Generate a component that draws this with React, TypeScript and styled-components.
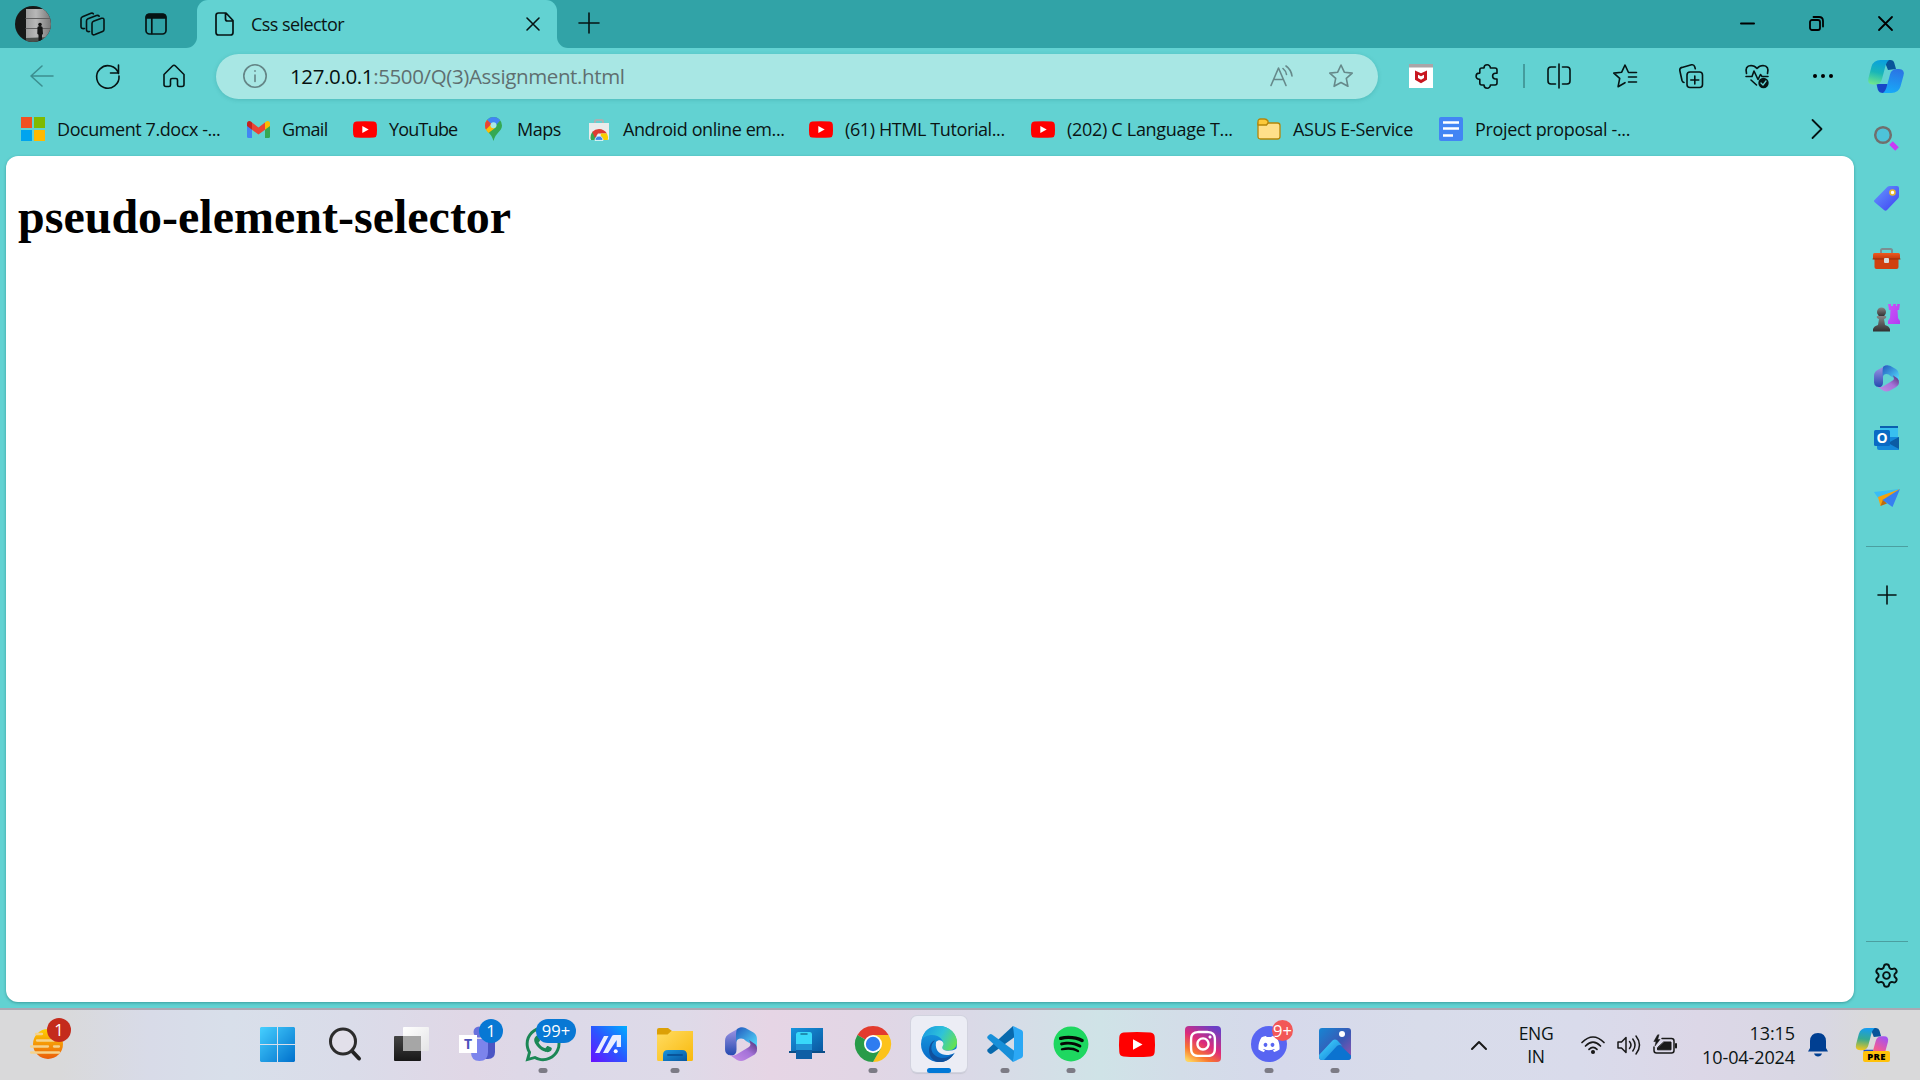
import React from 'react';
import styled, { createGlobalStyle } from 'styled-components';
import { FaDiscord, FaInstagram, FaSpotify, FaWhatsapp } from 'react-icons/fa';
import { Settings } from 'lucide-react';

const UI_FONT = '"Open Sans", "Noto Sans", sans-serif';

const GlobalStyle = createGlobalStyle`
  *, *::before, *::after { box-sizing: border-box; }
  html, body { margin: 0; padding: 0; overflow: hidden; }
  body { font-family: ${UI_FONT}; color: #0b1414; }
  svg { display: block; overflow: visible; flex: none; }
`;

const Desktop = styled.div`
  display: flex;
  flex-direction: column;
  width: 1920px;
  height: 1080px;
  background: #62d2d2;
  overflow: hidden;
`;

/* ---------- title bar ---------- */

const TitleBar = styled.header`
  display: flex;
  height: 48px;
  background: #62d2d2;
`;

const TitleLeft = styled.div`
  display: flex;
  align-items: center;
  width: 197px;
  padding-left: 15px;
  background: #31a3a7;
  border-bottom-right-radius: 11px;
`;

const TitleIcon = styled.span<{ $gap: number }>`
  margin-left: ${(p) => p.$gap}px;
`;

const TabBack = styled.div`
  background: #31a3a7;
  width: 360px;
`;

const Tab = styled.div`
  display: flex;
  align-items: center;
  width: 360px;
  height: 48px;
  padding: 0 17px 0 18px;
  background: #62d2d2;
  border-radius: 11px 11px 0 0;
`;

const TabTitle = styled.span`
  flex: 1;
  margin-left: 17px;
  font-size: 18px;
  letter-spacing: -0.56px;
  line-height: 24px;
`;

const TitleRight = styled.div`
  display: flex;
  flex: 1;
  align-items: center;
  justify-content: space-between;
  padding: 0 27px 2px 22px;
  background: #31a3a7;
  border-bottom-left-radius: 11px;
`;

const WindowButtons = styled.div`
  display: flex;
  align-items: center;
  gap: 54px;
`;

/* ---------- toolbar ---------- */

const Toolbar = styled.nav`
  display: flex;
  align-items: center;
  height: 57px;
  padding: 0 15px 1px 30px;
`;

const NavButtons = styled.div`
  display: flex;
  align-items: center;
  gap: 42px;
  width: 186px;
`;

const AddressBar = styled.div`
  display: flex;
  align-items: center;
  width: 1162px;
  height: 45px;
  padding: 0 24px 0 27px;
  background: #a8e7e4;
  border-radius: 23px;
  box-shadow: 0 1px 4px rgba(20, 110, 110, 0.22);
`;

const Url = styled.span`
  flex: 1;
  margin-left: 23px;
  color: #5f6f70;
  font-size: 20.5px;
  letter-spacing: -0.37px;
  line-height: 28px;
  b { color: #061010; font-weight: 400; }
`;

const AddressActions = styled.div`
  display: flex;
  gap: 35px;
  margin-right: 1px;
`;

const ToolActions = styled.div`
  display: flex;
  align-items: center;
  gap: 42px;
  flex: 1;
  margin-left: 31px;
`;

const ToolDivider = styled.span`
  width: 2px;
  height: 24px;
  margin: 0 -20px 0 -18px;
  background: #449c9d;
`;

const CopilotButton = styled.div`
  margin-left: -9px;
`;

/* ---------- bookmarks ---------- */

const BookmarkBar = styled.div`
  display: flex;
  align-items: center;
  height: 48px;
  padding: 0 32px 0 21px;
`;

const Bookmark = styled.div<{ $width: number }>`
  display: flex;
  align-items: center;
  width: ${(p) => p.$width}px;
`;

const BookmarkLabel = styled.span<{ $track: number; $gap?: number }>`
  margin-left: ${(p) => p.$gap ?? 12}px;
  font-size: 18px;
  letter-spacing: ${(p) => p.$track}px;
  line-height: 24px;
  white-space: nowrap;
`;

const More = styled.div`
  margin-left: auto;
`;

/* ---------- main area ---------- */

const Body = styled.div`
  display: flex;
  flex: 1;
  min-height: 0;
`;

const BrowserColumn = styled.div`
  display: flex;
  flex-direction: column;
  width: 1854px;
`;

const PageFrame = styled.main`
  flex: 1;
  margin: 3px 0 6px 6px;
  padding: 33px 12px;
  background: #fff;
  border-radius: 12px;
  box-shadow: 0 1px 3px rgba(10, 90, 90, 0.45);
`;

const Heading = styled.h1`
  margin: 0;
  color: #000;
  font: bold 48px/56px "Liberation Serif", serif;
`;

const Sidebar = styled.aside`
  display: flex;
  flex-direction: column;
  align-items: center;
  width: 66px;
  padding: 3px 1px 0 0;
`;

const SideItem = styled.div<{ $height?: number }>`
  display: grid;
  place-items: center;
  height: ${(p) => p.$height ?? 60}px;
`;

const SideRule = styled.hr`
  width: 42px;
  height: 1px;
  margin: 0;
  border: 0;
  background: #4b9fa0;
`;

const Spacer = styled.div`
  flex: 1;
`;

/* ---------- taskbar ---------- */

const Taskbar = styled.footer`
  display: flex;
  height: 72px;
  border-top: 2px solid #aaa9b3;
  background: linear-gradient(90deg,
    #d9d9da 0, #d9d9da 60px, #d8dbe8 150px, #d8dfea 230px, #dadce9 350px,
    #e0d7e6 470px, #dcd9e8 570px, #dedae8 680px, #e6d5e5 770px, #e2d6e5 860px,
    #dad9e7 970px, #cfe3e7 1100px, #d3dde8 1180px, #d6d9eb 1280px, #d8dcea 1420px,
    #d9dbeb 1580px, #dcd7e7 1700px, #d8d7e3 1820px, #d9d9da 1870px);
`;

const Weather = styled.div`
  position: relative;
  width: 244px;
  padding: 19px 0 0 30px;
`;

const Apps = styled.div`
  display: flex;
`;

const AppCell = styled.div<{ $active?: boolean }>`
  position: relative;
  display: grid;
  place-items: center;
  width: 56px;
  height: 56px;
  margin: 6px 5px 0;
  border-radius: 6px;
  background: ${(p) => (p.$active ? '#ecedf5' : 'transparent')};
  box-shadow: ${(p) => (p.$active ? '0 0 0 1px #d2d3df, 0 2px 1px #c8c8d4' : 'none')};

  &:first-child { margin-right: 7px; }
`;

const RunMark = styled.i<{ $active?: boolean }>`
  position: absolute;
  bottom: -1px;
  left: 50%;
  width: ${(p) => (p.$active ? 24 : 9)}px;
  height: 5px;
  border-radius: 3px;
  background: ${(p) => (p.$active ? '#0078d7' : '#7c7b85')};
  transform: translateX(-50%);
`;

const Badge = styled.span<{ $left: number; $top: number; $width: number; $color: string; $size?: number }>`
  position: absolute;
  left: ${(p) => p.$left}px;
  top: ${(p) => p.$top}px;
  width: ${(p) => p.$width}px;
  height: ${(p) => p.$size ?? 24}px;
  border-radius: 12px;
  background: ${(p) => p.$color};
  color: #fff;
  font-size: 16.5px;
  line-height: ${(p) => p.$size ?? 24}px;
  text-align: center;
`;

const Tray = styled.div`
  display: flex;
  align-items: center;
  flex: 1;
  padding-left: 103px;
`;

const Language = styled.div`
  width: 44px;
  margin-left: 27px;
  font-size: 17.5px;
  line-height: 23px;
  letter-spacing: -0.4px;
  text-align: center;
`;

const StatusIcons = styled.div`
  display: flex;
  align-items: center;
  gap: 12px;
  margin-left: 23px;
`;

const Clock = styled.div`
  width: 118px;
  padding-bottom: 1px;
  font-size: 18px;
  letter-spacing: -0.1px;
  line-height: 24px;
  text-align: right;
`;

const TrayItem = styled.div<{ $gap: number }>`
  margin-left: ${(p) => p.$gap}px;
`;

/* ---------- drawings ---------- */

type IconProps = { w: number; h?: number; box?: string; stroke?: string; sw?: number; children: React.ReactNode };

const Icon = ({ w, h = w, box, stroke, sw = 1.6, children }: IconProps) => (
  <svg
    width={w}
    height={h}
    viewBox={box ?? `0 0 ${w} ${h}`}
    fill={stroke ? 'none' : undefined}
    stroke={stroke}
    strokeWidth={stroke ? sw : undefined}
    strokeLinecap="round"
    strokeLinejoin="round"
  >
    {children}
  </svg>
);

const INK = '#061414';

const Gradients = () => (
  <svg width="0" height="0" style={{ position: 'absolute' }}>
    <defs>
      <linearGradient id="win" x1="0" y1="0" x2="1" y2="1"><stop stopColor="#46d0ff" /><stop offset="1" stopColor="#0070cc" /></linearGradient>
      <linearGradient id="asus" x1="0" y1="1" x2="1" y2="0"><stop stopColor="#6a10ff" /><stop offset=".5" stopColor="#2a57ff" /><stop offset="1" stopColor="#00aeff" /></linearGradient>
      <linearGradient id="folder" x1="0" y1="0" x2="1" y2="1"><stop stopColor="#ffdc62" /><stop offset="1" stopColor="#f9b90c" /></linearGradient>
      <linearGradient id="blueDeep" x1="0" y1="0" x2="1" y2="1"><stop stopColor="#1795de" /><stop offset="1" stopColor="#0a57a0" /></linearGradient>
      <linearGradient id="m1" x1="0" y1="0" x2="0" y2="1"><stop stopColor="#a79ae8" /><stop offset="1" stopColor="#2449b0" /></linearGradient>
      <linearGradient id="m2" x1="0" y1="0" x2="1" y2="1"><stop stopColor="#2258bd" /><stop offset="1" stopColor="#55e0ff" /></linearGradient>
      <linearGradient id="m3" x1="0" y1="1" x2="1" y2="0"><stop stopColor="#c88fe8" /><stop offset=".55" stopColor="#a472d8" /><stop offset="1" stopColor="#4b2c73" /></linearGradient>
      <linearGradient id="edgeTop" x1="0" y1="0.3" x2="1" y2="0.7"><stop stopColor="#1b9de2" /><stop offset=".5" stopColor="#2fc3d8" /><stop offset="1" stopColor="#67e34c" /></linearGradient>
      <linearGradient id="edgeLeft" x1="0" y1="0" x2="0" y2="1"><stop stopColor="#1aa0e2" /><stop offset="1" stopColor="#0868c6" /></linearGradient>
      <linearGradient id="insta" x1=".15" y1="1" x2=".75" y2="0"><stop stopColor="#ffd45c" /><stop offset=".25" stopColor="#f9762f" /><stop offset=".55" stopColor="#dc2a7b" /><stop offset="1" stopColor="#6a3fc6" /></linearGradient>
      <linearGradient id="photo" x1="0" y1="0" x2="1" y2="1"><stop stopColor="#1686d4" /><stop offset=".55" stopColor="#3a58b4" /><stop offset="1" stopColor="#9a52b0" /></linearGradient>
      <linearGradient id="sun" x1="0" y1="0" x2="0" y2="1"><stop stopColor="#ffd000" /><stop offset="1" stopColor="#ea5c0c" /></linearGradient>
      <linearGradient id="copA" x1=".5" y1="0" x2=".3" y2="1"><stop stopColor="#0aa0dd" /><stop offset=".5" stopColor="#19b6b8" /><stop offset="1" stopColor="#6ee68c" /></linearGradient>
      <linearGradient id="copB" x1=".6" y1="0" x2=".4" y2="1"><stop stopColor="#2b74e4" /><stop offset="1" stopColor="#17a9f8" /></linearGradient>
      <linearGradient id="preA" x1=".5" y1="0" x2=".4" y2="1"><stop stopColor="#159cf2" /><stop offset=".5" stopColor="#36aa90" /><stop offset="1" stopColor="#f3c61c" /></linearGradient>
      <linearGradient id="preB" x1=".8" y1="0" x2=".3" y2="1"><stop stopColor="#a052f5" /><stop offset=".6" stopColor="#ee5a9a" /><stop offset="1" stopColor="#ff7d52" /></linearGradient>
      <linearGradient id="tag" x1="0" y1="0" x2="1" y2="1"><stop stopColor="#669aff" /><stop offset="1" stopColor="#3e3ff2" /></linearGradient>
      <linearGradient id="pink" x1="0" y1="0" x2="1" y2="1"><stop stopColor="#cc55f8" /><stop offset="1" stopColor="#b23cf2" /></linearGradient>
      <linearGradient id="box" x1="0" y1="0" x2="0" y2="1"><stop stopColor="#ee5a20" /><stop offset="1" stopColor="#c23b0e" /></linearGradient>
      <linearGradient id="pawn" x1="0" y1="0" x2="0" y2="1"><stop stopColor="#858585" /><stop offset="1" stopColor="#303030" /></linearGradient>
      <linearGradient id="wall" x1="0" y1="0" x2="1" y2="0"><stop stopColor="#9c9c9c" /><stop offset=".4" stopColor="#b8b8b8" /><stop offset="1" stopColor="#777" /></linearGradient>
      <linearGradient id="white" x1="0" y1="0" x2="1" y2="1"><stop stopColor="#fff" /><stop offset="1" stopColor="#e4e4e6" /></linearGradient>
      <linearGradient id="dark" x1="0" y1="0" x2="0" y2="1"><stop stopColor="#444" /><stop offset="1" stopColor="#171717" /></linearGradient>
      <linearGradient id="aqua" x1="0" y1="0" x2="1" y2="1"><stop stopColor="#4bdcff" /><stop offset="1" stopColor="#0a78d8" /></linearGradient>
      <clipPath id="round"><circle cx="18" cy="18" r="18" /></clipPath>
    </defs>
  </svg>
);

const Avatar = () => (
  <Icon w={36}>
    <g clipPath="url(#round)">
      <rect width="36" height="36" fill="#161817" />
      <rect x="11" y="3" width="25" height="30" fill="url(#wall)" />
      <path d="M11 12.5h25M11 22.5h25" stroke="#606060" strokeWidth="1" />
      <path d="M11 32l25-1v5H11z" fill="#4b4f4c" />
      <circle cx="25" cy="18.5" r="1.8" fill="#151515" />
      <path d="M22.5 21q2.500-2 5 0l.5 7-1 .8V35h-3.500v-6.200l-1.200-1z" fill="#151515" />
    </g>
  </Icon>
);

const Workspaces = () => (
  <Icon w={25} h={24} stroke={INK} sw={1.6}>
    <path d="M13.500 9.300 21.500 6.300Q24 5.700 24 8v9.500q0 1.500-1.500 2.100l-7.500 3Q12 23.500 12 21V11.500q0-1.600 1.500-2.200z" />
    <path d="M9.500 19.500Q6.500 20 6.500 17.500V9q0-1.500 1.500-2.200L16.500 3.500q1.800-.5 2.700.7" />
    <path d="M4.500 16.500Q1 17 1 14.500V7q0-1.600 1.500-2.200L11 1.300q1.500-.5 2.300.5" />
  </Icon>
);

const TabActions = () => (
  <Icon w={22} stroke={INK} sw={1.7}>
    <rect x="1" y="1" width="20" height="20" rx="3.500" />
    <path d="M1.500 5h19V3.500q0-2-2-2h-15q-2 0-2 2z" fill={INK} />
    <path d="M6.800 5v15.500" />
  </Icon>
);

const PageIcon = () => (
  <Icon w={19} h={24} stroke={INK} sw={1.700}>
    <path d="M1 3.500Q1 1 3.500 1H11l7 7.500V20.500Q18 23 15.500 23h-12Q1 23 1 20.500zM10.500 1.500V7q0 2 2 2H18" />
  </Icon>
);

const MicrosoftIcon = () => (
  <Icon w={24}>
    <path d="M0 0h11v11H0z" fill="#f25022" /><path d="M13 0h11v11H13z" fill="#7fba00" />
    <path d="M0 13h11v11H0z" fill="#00a4ef" /><path d="M13 13h11v11H13z" fill="#ffb900" />
  </Icon>
);

const GmailIcon = () => (
  <Icon w={23} h={17}>
    <path d="M0 3v12.500Q0 17 1.500 17H5V7z" fill="#4285f4" />
    <path d="M23 3v12.500q0 1.500-1.500 1.500H18V7z" fill="#34a853" />
    <path d="M5 1.500v7.200l6.500 4.900L18 8.700V1.500l-6.500 5z" fill="#ea4335" />
    <path d="M18 1.500v7.200L23 5V2.500C23 0 20.500-.7 18.500 1z" fill="#fbbc04" />
    <path d="M5 1.500v7.200L0 5V2.500C0 0 2.500-.7 4.500 1z" fill="#c5221f" />
  </Icon>
);

const YouTubeIcon = ({ w = 24, h = 17 }) => (
  <Icon w={w} h={h} box="0 0 36 25">
    <path d="M4.500.5Q18-.5 31.500.5 35.500 1 35.700 5q.6 7.500 0 15-.3 4-4.200 4.500-13.500 1-27 0Q.5 24 .3 20-.3 12.500.3 5 .6 1 4.500.5z" fill="#f00" />
    <path d="M14 7.300 23.500 12.500 14 17.700z" fill="#fff" />
  </Icon>
);

const MapsIcon = () => (
  <Icon w={17} h={24}>
    <path d="M8.500 0A8.500 8.500 0 0 1 17 8.500c0 6-6.500 7-8.500 15.500C6.500 15.500 0 14.500 0 8.500A8.500 8.500 0 0 1 8.500 0z" fill="#34a853" />
    <path d="M2 3 7 7 10 11 3.500 16Q0 12.500 0 8.500 0 5.500 2 3z" fill="#fbbc04" />
    <path d="M2 3Q4.500 0 8.500 0q4.500 0 6.700 3.500L8.500 11z" fill="#4285f4" />
    <path d="M2 3 6.500 7 1 12.500Q0 11 0 8.500 0 5.500 2 3z" fill="#ea4335" />
    <circle cx="8.500" cy="8.300" r="3" fill="#a8e7e4" />
  </Icon>
);

const StoreIcon = () => (
  <Icon w={20} h={21}>
    <path d="M6 5V2.500Q6 1 7.500 1h5Q14 1 14 2.500V5" fill="none" stroke="#a9b2b3" strokeWidth="2" />
    <path d="M0 4h20v15.500Q20 21 18.500 21h-17Q0 21 0 19.500z" fill="#e9ecec" />
    <path d="M2 21A8 8 0 0 1 4 12.500L10 21z" fill="#35a853" />
    <path d="M3.200 13Q6 10 10 10q5 0 8 4.500h-9L6 19z" fill="#dd3b32" />
    <path d="M12 14.500h6q1.500 3 .8 6.500H11z" fill="#f9cf00" />
    <path d="M6 21a4 4 0 1 1 8 0z" fill="#3d86e8" stroke="#fff" strokeWidth=".8" />
  </Icon>
);

const BookmarkFolder = () => (
  <Icon w={24} h={22} stroke="#b58608" sw={1.300}>
    <path d="M1 5h19.500Q23 5 23 7.500v11q0 2.500-2.500 2.500h-17Q1 21 1 18.500z" fill="#ffe08a" />
    <path d="M1 7V3.500Q1 1 3.500 1h4q2 0 3.500 2v2L9.500 7z" fill="#fcc93a" />
  </Icon>
);

const DocsIcon = () => (
  <Icon w={24}>
    <rect width="24" height="24" rx="2" fill="#4285f4" />
    <path d="M4 5h16M4 11h16M4 18h10" transform="translate(0 .5)" stroke="#fff" strokeWidth="2.600" strokeLinecap="butt" />
  </Icon>
);

const McAfee = () => (
  <Icon w={24}>
    <rect width="24" height="24" fill="#fff" /><rect width="24" height="3.500" fill="#aaa5a8" />
    <path d="M6 6.500 12 9.300l6-2.800v9.300L12 19.300l-6-3.500z" fill="#c8161f" />
    <path d="M9 10.800 12 12.200l3-1.400v3.300L12 15.800 9 14.100z" fill="#fff" />
  </Icon>
);

const Copilot = ({ a = 'url(#copA)', b = 'url(#copB)', w = 36, h = 33 }) => (
  <Icon w={w} h={h} box="0 0 36 33">
    <path d="M16 0h6.500q3 0 3.800 3L28 9l-8 1z" fill="#08559a" />
    <path d="M8.500 24h11l1 8q-1 1-5.500 1-4 0-5.200-3.500z" fill="#1747c8" />
    <path d="M12.500 0h8.500q-2.500 2-3.300 5L14 19q-1.300 5.500-7 5.500H5Q-1 24.500.5 18L3.500 6.500Q5.500 0 12.500 0z" fill={a} />
    <path d="M23.500 33H15q2.500-2 3.300-5L22 14.500q1.300-5.500 7-5.500h2q6 0 4.500 6.500L32.500 26.500Q30.500 33 23.500 33z" fill={b} />
  </Icon>
);

const M365 = ({ w = 26 }) => (
  <Icon w={w} h={w * 1.06} box="0 0 32 34">
    <path d="M16 0 4.500 6.400Q0 9 0 13.500v9q0 4 3.500 5.500l4 .5q4-1 4-6V15q0-3.500 3-5l6-4z" fill="url(#m1)" />
    <path d="M12 2q4-3 8.500-1l8 4.500Q32 8 32 12v8.500L21 14q-2-2.500-5-2.500-4 0-5 4V7q0-3 1-5z" fill="url(#m2)" />
    <path d="M4 27.500q4 2 7.500 0L24 20q3-2 0-7l6 4q2.500 2 2 6 0 3.500-4 5.500l-8 4.500q-4 2-8 0z" fill="url(#m3)" />
  </Icon>
);

const ChromeIcon = () => (
  <Icon w={36}>
    <path d="M18 18 2.400 9A18 18 0 0 1 33.600 9H18z" fill="#e33b2e" />
    <path d="M18 18V9h15.600A18 18 0 0 1 18 36l7.800-13.500z" fill="#fcc31c" />
    <path d="M10.200 13.500 2.400 9A18 18 0 0 0 18 36l7.800-13.500L18 27z" fill="#289b49" />
    <circle cx="18" cy="18" r="9" fill="#fff" /><circle cx="18" cy="18" r="7.200" fill="#2f7cf0" />
  </Icon>
);

const EdgeIcon = () => (
  <Icon w={36}>
    <circle cx="18" cy="18" r="18" fill="url(#edgeLeft)" />
    <path d="M1 13Q4 0 18 0c11 0 18 8 18 16 0 6-4.500 8.500-9 8.500-5 0-7-2-5.500-4.500C24 15.500 19 9 11 9 6 9 2.500 11.500 1 13z" fill="url(#edgeTop)" />
    <path d="M14 14.500c-5 4-5 12 1 15.500 6 4 13 1.500 18-2.800C28 36 20 37 15 35.500 5 31 7 15.500 14 14.500z" fill="#10509c" />
    <path d="M15 16c2-2.500 6.500-2.500 7.300 1.300.4 1.700-.6 2.700-1 3.700-.7 2.500 3 3.800 6.200 3.700 3-.1 5.500-.5 8.500-2.500v3.500l-3 1.500c-7 4-20 2-18-11.200z" fill="#ecedf5" />
  </Icon>
);

const VsCodeIcon = () => (
  <Icon w={36}>
    <path d="M26 0 .8 23.200q-1.300 1.500 0 2.800l1.700 1.600q1.200.8 2.500 0L29 10z" fill="#0769ad" />
    <path d="M26 36 .8 12.800q-1.300-1.500 0-2.800l1.700-1.600q1.200-.8 2.500 0L29 26z" fill="#178fd9" />
    <path d="M26 0 34.500 4Q36 4.700 36 6.500v23q0 1.800-1.500 2.500L26 36l1-9V9z" fill="#2ba8f5" />
  </Icon>
);

const SpotifyIcon = () => (
  <Icon w={36}>
    <circle cx="18" cy="18" r="15" fill="#050805" />
    <FaSpotify size={36} color="#1ed760" />
  </Icon>
);

const InstagramIcon = () => (
  <Icon w={36}>
    <rect width="36" height="36" rx="4" fill="url(#insta)" />
    <svg x="3" y="3" width="30" height="30"><FaInstagram size={30} color="#fff" /></svg>
  </Icon>
);

const DiscordIcon = () => (
  <Icon w={36}>
    <circle cx="18" cy="18" r="18" fill="#5865f2" />
    <svg x="6.500" y="6.500" width="23" height="23"><FaDiscord size={23} color="#fff" /></svg>
  </Icon>
);

const PhotosIcon = () => (
  <Icon w={32}>
    <rect width="32" height="32" rx="3" fill="url(#photo)" />
    <circle cx="23" cy="6" r="3" fill="#fff" />
    <path d="M4 32 18 18q2-2 4 0l10 9.500V29q0 3-3 3z" fill="#0b73d0" />
    <path d="M0 27 13.500 12.500q2.500-2 5 0l5 5.500q-3-2-5.500 0L5 32H3q-3 0-3-3z" fill="url(#aqua)" />
  </Icon>
);

const TeamsIcon = () => (
  <Icon w={36}>
    <circle cx="20" cy="6" r="5.500" fill="#6870dc" />
    <path d="M24 13h12v13q0 7-7 7h-5z" fill="#4b55c4" />
    <path d="M12 13h17v13q0 9-8.500 9T12 26z" fill="#7c84ec" />
    <rect x="0" y="9" width="18" height="18" fill="#fff" />
    <text x="9" y="23" textAnchor="middle" fontSize="14" fontWeight="700" fill="#4b53bc">T</text>
  </Icon>
);

const ExplorerIcon = () => (
  <Icon w={36} h={33}>
    <path d="M0 2Q0 0 2 0h9l4 3v5H0z" fill="#dca006" />
    <path d="M0 6.500h10.500L14.500 3H36v28.500q0 1.500-1.500 1.500h-33Q0 33 0 31.500z" fill="url(#folder)" />
    <path d="M6 33v-6q0-5 5-5h14q5 0 5 5v6z" fill="url(#blueDeep)" />
    <path d="M11 27h14" stroke="#08549a" strokeWidth="2" />
  </Icon>
);

const PhoneLinkIcon = () => (
  <Icon w={36} h={32}>
    <path d="M2 0h32v24H2z" fill="url(#blueDeep)" /><path d="M0 23h36v2H0z" fill="#0b4e88" />
    <path d="M7 31V6q0-2 2-2h12q2 0 2 2v25z" fill="#0a4e88" />
    <path d="M7 16V6q0-2 2-2h12q2 0 2 2v10z" fill="#38d8fa" />
    <path d="M7 16h16v6H7z" fill="#2092d4" /><path d="M7 22h16v9H7z" fill="#0f5fa5" />
    <path d="M12 6h6" stroke="#17759a" strokeWidth="1.500" />
  </Icon>
);

const AsusIcon = () => (
  <Icon w={36}>
    <rect width="36" height="36" fill="url(#asus)" />
    <path d="M4 27 13 10h4.500L8.500 27zM12 27 21 10q.5-1 2-1H30v12h-4.300v-7L17 27z" fill="#e9eeff" />
    <circle cx="24.700" cy="25.200" r="2" fill="#fff" />
  </Icon>
);

const TaskViewIcon = () => (
  <Icon w={35} h={34}>
    <rect y="9" width="27" height="25" rx="1" fill="url(#dark)" />
    <rect x="9" y="0" width="26" height="24" rx="1" fill="url(#white)" />
    <path d="M9 9h18v15H9z" fill="#a6a6a6" />
  </Icon>
);

const StartIcon = () => (
  <Icon w={35}>
    <path d="M1 0h16v17H0V1zM18 0h16l1 1v16H18zM0 18h17v17H1l-1-1zM18 18h17v16l-1 1H18z" fill="url(#win)" />
  </Icon>
);

const apps: { icon: React.ReactNode; running?: boolean; active?: boolean; badge?: React.ReactNode }[] = [
  { icon: <StartIcon /> },
  { icon: <Icon w={32} h={34}><path d="M22.500 23.500 30 31.500" stroke="#222" strokeWidth="4" /><circle cx="14" cy="14.500" r="12.500" fill="#e2e0ea" stroke="#2c2c2c" strokeWidth="3" /></Icon> },
  { icon: <TaskViewIcon /> },
  { icon: <TeamsIcon />, badge: <Badge $left={30} $top={3} $width={24} $color="#0878d4">1</Badge> },
  { icon: <FaWhatsapp size={40} color="#1b8755" />, running: true, badge: <Badge $left={21} $top={3} $width={40} $color="#0878d4">99+</Badge> },
  { icon: <AsusIcon /> },
  { icon: <ExplorerIcon />, running: true },
  { icon: <M365 w={32} /> },
  { icon: <PhoneLinkIcon /> },
  { icon: <ChromeIcon />, running: true },
  { icon: <EdgeIcon />, running: true, active: true },
  { icon: <VsCodeIcon />, running: true },
  { icon: <SpotifyIcon />, running: true },
  { icon: <YouTubeIcon w={36} h={25} /> },
  { icon: <InstagramIcon /> },
  { icon: <DiscordIcon />, running: true, badge: <Badge $left={31} $top={4} $width={21} $size={21} $color="#f25757">9+</Badge> },
  { icon: <PhotosIcon />, running: true },
];

const bookmarks = [
  { icon: <MicrosoftIcon />, label: 'Document 7.docx -...', width: 226, track: -0.43 },
  { icon: <GmailIcon />, label: 'Gmail', width: 106, track: -0.65 },
  { icon: <YouTubeIcon />, label: 'YouTube', width: 132, track: -0.8 },
  { icon: <MapsIcon />, label: 'Maps', width: 104, track: -0.45, gap: 15 },
  { icon: <StoreIcon />, label: 'Android online em...', width: 220, track: -0.4, gap: 14 },
  { icon: <YouTubeIcon />, label: '(61) HTML Tutorial...', width: 222, track: -0.4 },
  { icon: <YouTubeIcon />, label: '(202) C Language T...', width: 226, track: -0.3 },
  { icon: <BookmarkFolder />, label: 'ASUS E-Service', width: 182, track: -0.31 },
  { icon: <DocsIcon />, label: 'Project proposal -...', width: 200, track: -0.34 },
];

const sideApps = [
  <Icon w={25}><path d="m17 17 6 6" stroke="#c83cf6" strokeWidth="5" strokeLinecap="butt" /><circle cx="9" cy="9" r="7.800" fill="#4dc3d9" stroke="#716f6d" strokeWidth="2.500" /></Icon>,
  <Icon w={25}><path d="M13.500.8Q14.500 0 16 0h7q2 0 2 2v8q0 1.500-1 2.500L13 24q-1.500 1.500-3 0L1 16.500q-2-1.500 0-3z" fill="url(#tag)" /><circle cx="18.500" cy="6.500" r="2.500" fill="#fff" stroke="#e6b82c" strokeWidth="1.600" /></Icon>,
  <Icon w={27} h={21}><path d="M8 6V2.500Q8 1 9.500 1h8Q19 1 19 2.500V6" fill="none" stroke="#7c8e91" strokeWidth="2" /><path d="M1.500 11h24v8q0 2-2 2h-20q-2 0-2-2z" fill="#d0400f" /><path d="M1.500 5h24q1.500 0 1.500 1.500V11H0V6.500Q0 5 1.500 5z" fill="url(#box)" /><path d="M0 11h27" stroke="#962c0c" /><rect x="11" y="10" width="5" height="5" rx="1" fill="#d9dcdd" /></Icon>,
  <Icon w={27} h={28}><path d="M15 0h3v2h2V0h3v2h1V0h3l-1 6h-1.500l.5 8 2 3v3H15v-3l2-3 .5-8H16z" fill="url(#pink)" /><circle cx="8.500" cy="8" r="4.500" fill="url(#pawn)" /><path d="M4 12h9q1 2-2 3l1 6q4 1 5 4v2.500H0V25q1-3 5-4l1-6q-3-1-2-3z" fill="url(#pawn)" /></Icon>,
  <M365 w={25} />,
  <Icon w={25}><path d="M6 0h18v14H6z" fill="#38c0f0" /><path d="M6 0h18v2H6z" fill="#0a5fae" /><path d="M3 11h22v13H5q-2 0-2-2z" fill="#1488da" /><path d="M14 17 25 11v12z" fill="#0c5ca4" /><rect y="4" width="16" height="16" rx="1.500" fill="#0a6ac4" /><text x="8" y="17" textAnchor="middle" fontSize="14" fontWeight="700" fill="#fff">O</text></Icon>,
  <Icon w={26} h={18}><path d="M0 3 26 0 4 9z" fill="#38bdf8" /><path d="M26 0 4 8l2.500 9z" fill="#f5a20c" /><path d="m6.500 17L9 10.500l4 4z" fill="#bc6b10" /><path d="M26 0 8.500 11l10 7z" fill="#377ff0" /></Icon>,
];

export default function App() {
  return (
    <Desktop>
      <GlobalStyle />
      <Gradients />
      <TitleBar>
        <TitleLeft>
          <Avatar />
          <TitleIcon $gap={29}><Workspaces /></TitleIcon>
          <TitleIcon $gap={40}><TabActions /></TitleIcon>
        </TitleLeft>
        <TabBack>
          <Tab>
            <PageIcon />
            <TabTitle>Css selector</TabTitle>
            <Icon w={14} stroke={INK}><path d="m1 1 12 12M13 1 1 13" /></Icon>
          </Tab>
        </TabBack>
        <TitleRight>
          <Icon w={20} stroke={INK}><path d="M10 0v20M0 10h20" /></Icon>
          <WindowButtons>
            <Icon w={15} stroke="#000" sw={2}><path d="M1 7.500h13" /></Icon>
            <Icon w={15} stroke="#000" sw={1.8}><rect x="1" y="4" width="10" height="10" rx="2" /><path d="M4.500 1H10q4 0 4 4v5.500" /></Icon>
            <Icon w={15} stroke="#000" sw={1.8}><path d="m1 1 13 13M14 1 1 14" /></Icon>
          </WindowButtons>
        </TitleRight>
      </TitleBar>

      <Toolbar>
        <NavButtons>
          <Icon w={24} stroke="#3c8f90"><path d="M23 12H1M12 2 1 12l11 10" /></Icon>
          <Icon w={24} stroke={INK}><path d="M22.500 9.500A11.200 11.200 0 1 0 23 12M22.500 1v8h-8" /></Icon>
          <Icon w={24} stroke={INK}><path d="M2 10.500 10.500 2q1.500-1.500 3 0L22 10.500V20.500Q22 22.500 20 22.500h-3q-1.500 0-1.500-1.500v-5q0-1.500-1.500-1.500h-4q-1.500 0-1.500 1.500v5q0 1.500-1.500 1.500H4q-2 0-2-2z" /></Icon>
        </NavButtons>
        <AddressBar>
          <Icon w={24} stroke="#648586"><circle cx="12" cy="12" r="11.200" /><path d="M12 11v6.500M12 6.800v.4" /></Icon>
          <Url><b>127.0.0.1</b>:5500/Q(3)Assignment.html</Url>
          <AddressActions>
            <Icon w={24} stroke="#66898a"><path d="M1 21.500 8.500 4 16 21.500M3.800 15.500h9.400M13 4.500q3 2.500 3.500 6M16 2q5 3.500 6 10" /></Icon>
            <Icon w={24} stroke="#66898a"><path d="m12 1 3.300 7.200 7.900.9-5.900 5.300 1.600 7.900L12 18.500l-6.900 3.800 1.600-7.900L.8 9.100l7.900-.9z" /></Icon>
          </AddressActions>
        </AddressBar>
        <ToolActions>
          <McAfee />
          <Icon w={24} stroke={INK}><path d="M9 4a3.200 3.200 0 0 1 6.400 0h4.600q2 0 2 2v3.200h-1.500a2.900 2.900 0 0 0 0 5.800H22v4q0 2-2 2h-4.600a3.200 3.200 0 0 1-6.400 0H6.800q-2 0-2-2v-3.700H4.200a3.100 3.100 0 0 1 0-6.200h.6V6q0-2 2-2z" /></Icon>
          <ToolDivider />
          <Icon w={24} stroke={INK}><path d="M12 0v24M8.500 3H4Q1 3 1 6v11q0 3 3 3h4.500M15.500 3H20q3 0 3 3v11q0 3-3 3h-4.500" /></Icon>
          <Icon w={24} stroke={INK}><path d="M15.500 8.500 12 1 8.700 8.200.8 9.100l5.900 5.300-1.600 8.300 6.900-4M16.500 8.500H23.500M15.500 13h8M15.500 18h8" /></Icon>
          <Icon w={24} stroke={INK}><rect x="8" y="8" width="15.500" height="15.500" rx="3" /><path d="M15.800 12v8M11.800 16h8M5 18.500q-1.500-.2-2-2L.8 6.500Q.5 4 3 3.400L12.500.8q2.500-.5 3.200 2l.6 2" /></Icon>
          <Icon w={24} stroke={INK}><path d="M1.500 9.500Q-.5 2 6 1.500q3.500 0 6 3Q14.500 1.500 18 1.500q6.500.5 4.500 8M1 12.500h6l2-5.500 4 8.500 2.500-5 1.500 2H23M6 16l5.500 5" /><circle cx="18.500" cy="19" r="5.200" fill={INK} stroke="none" /><path d="m16 19 2 2 3-4" stroke="#62d2d2" strokeWidth="1.300" /></Icon>
          <Icon w={24}><circle cx="4" cy="12" r="2" /><circle cx="12" cy="12" r="2" /><circle cx="20" cy="12" r="2" /></Icon>
          <CopilotButton><Copilot /></CopilotButton>
        </ToolActions>
      </Toolbar>

      <Body>
        <BrowserColumn>
          <BookmarkBar>
            {bookmarks.map((b) => (
              <Bookmark key={b.label} $width={b.width}>
                {b.icon}
                <BookmarkLabel $track={b.track} $gap={b.gap}>{b.label}</BookmarkLabel>
              </Bookmark>
            ))}
            <More><Icon w={11} h={18} stroke={INK} sw={1.800}><path d="m1.500 0 9 9-9 9" /></Icon></More>
          </BookmarkBar>
          <PageFrame>
            <Heading>pseudo-element-selector</Heading>
          </PageFrame>
        </BrowserColumn>
        <Sidebar>
          {sideApps.map((icon, i) => <SideItem key={i}>{icon}</SideItem>)}
          <SideItem $height={18} />
          <SideRule />
          <SideItem $height={96}><Icon w={18} stroke={INK}><path d="M9 0v18M0 9h18" /></Icon></SideItem>
          <Spacer />
          <SideRule />
          <SideItem $height={66}><Settings size={27} color={INK} strokeWidth={1.700} /></SideItem>
        </Sidebar>
      </Body>

      <Taskbar>
        <Weather>
          <Icon w={34} h={32}>
            <circle cx="18" cy="15" r="15" fill="url(#sun)" />
            <path d="M6 5h6M7 11.500h17M1 17.500h17M24 17.500h5M1 23.500h28" stroke="#f5d28c" strokeWidth="2.300" />
          </Icon>
          <Badge $left={47} $top={8} $width={24} $color="#c42b1c">1</Badge>
        </Weather>
        <Apps>
          {apps.map((app, i) => (
            <AppCell key={i} $active={app.active}>
              {app.icon}
              {app.running && <RunMark $active={app.active} />}
              {app.badge}
            </AppCell>
          ))}
        </Apps>
        <Tray>
          <Icon w={16} h={9} stroke="#191919" sw={2}><path d="m1 8 7-7 7 7" /></Icon>
          <Language>ENG<br />IN</Language>
          <StatusIcons>
            <Icon w={24} h={18} stroke="#191919" sw={1.700}><path d="M1 6.500q11-11 22 0M4.500 10q7.500-7.500 15 0M8 13.300q4-4 8 0" /><circle cx="12" cy="16" r="1.200" fill="#191919" /></Icon>
            <Icon w={24} h={20} stroke="#191919" sw={1.500}><path d="M1 7h3.500L9 2.500v15L4.500 13H1zM12.500 6.500q3 3.500 0 7M15.800 4q4.500 6 0 12M19 1q7 9 0 18" /></Icon>
            <Icon w={24} h={20} stroke="#191919" sw={1.500}><path d="M9 3.500h9.500Q21 3.500 21 6v9.500q0 2.500-2.500 2.500h-15Q1 18 1 15.500V12" /><path d="M11 7h7v7.800H4.500V13z" fill="#191919" strokeWidth="1" /><path d="M23 9v3.500" strokeWidth="2" /><path d="M4.500 0 .8 6.500H3L2 11l5-6.500H4.700L6 0z" fill="#191919" strokeWidth=".5" /></Icon>
          </StatusIcons>
          <Clock>13:15<br />10-04-2024</Clock>
          <TrayItem $gap={13}>
            <Icon w={20} h={24}><path d="M10 0q7.500 0 8 8v7l2 3.500H0L2 15V8q.5-8 8-8zM6 20.500h8q-1 3-4 3t-4-3z" fill="#003f92" /></Icon>
          </TrayItem>
          <TrayItem $gap={27}>
            <Icon w={36} h={34}>
              <Copilot a="url(#preA)" b="url(#preB)" w={34} h={30} />
              <rect x="8" y="23" width="27" height="11" rx="2" fill="#ffc20a" />
              <text x="21.500" y="32" textAnchor="middle" fontSize="9.500" fontWeight="800" letterSpacing=".3">PRE</text>
            </Icon>
          </TrayItem>
        </Tray>
      </Taskbar>
    </Desktop>
  );
}
